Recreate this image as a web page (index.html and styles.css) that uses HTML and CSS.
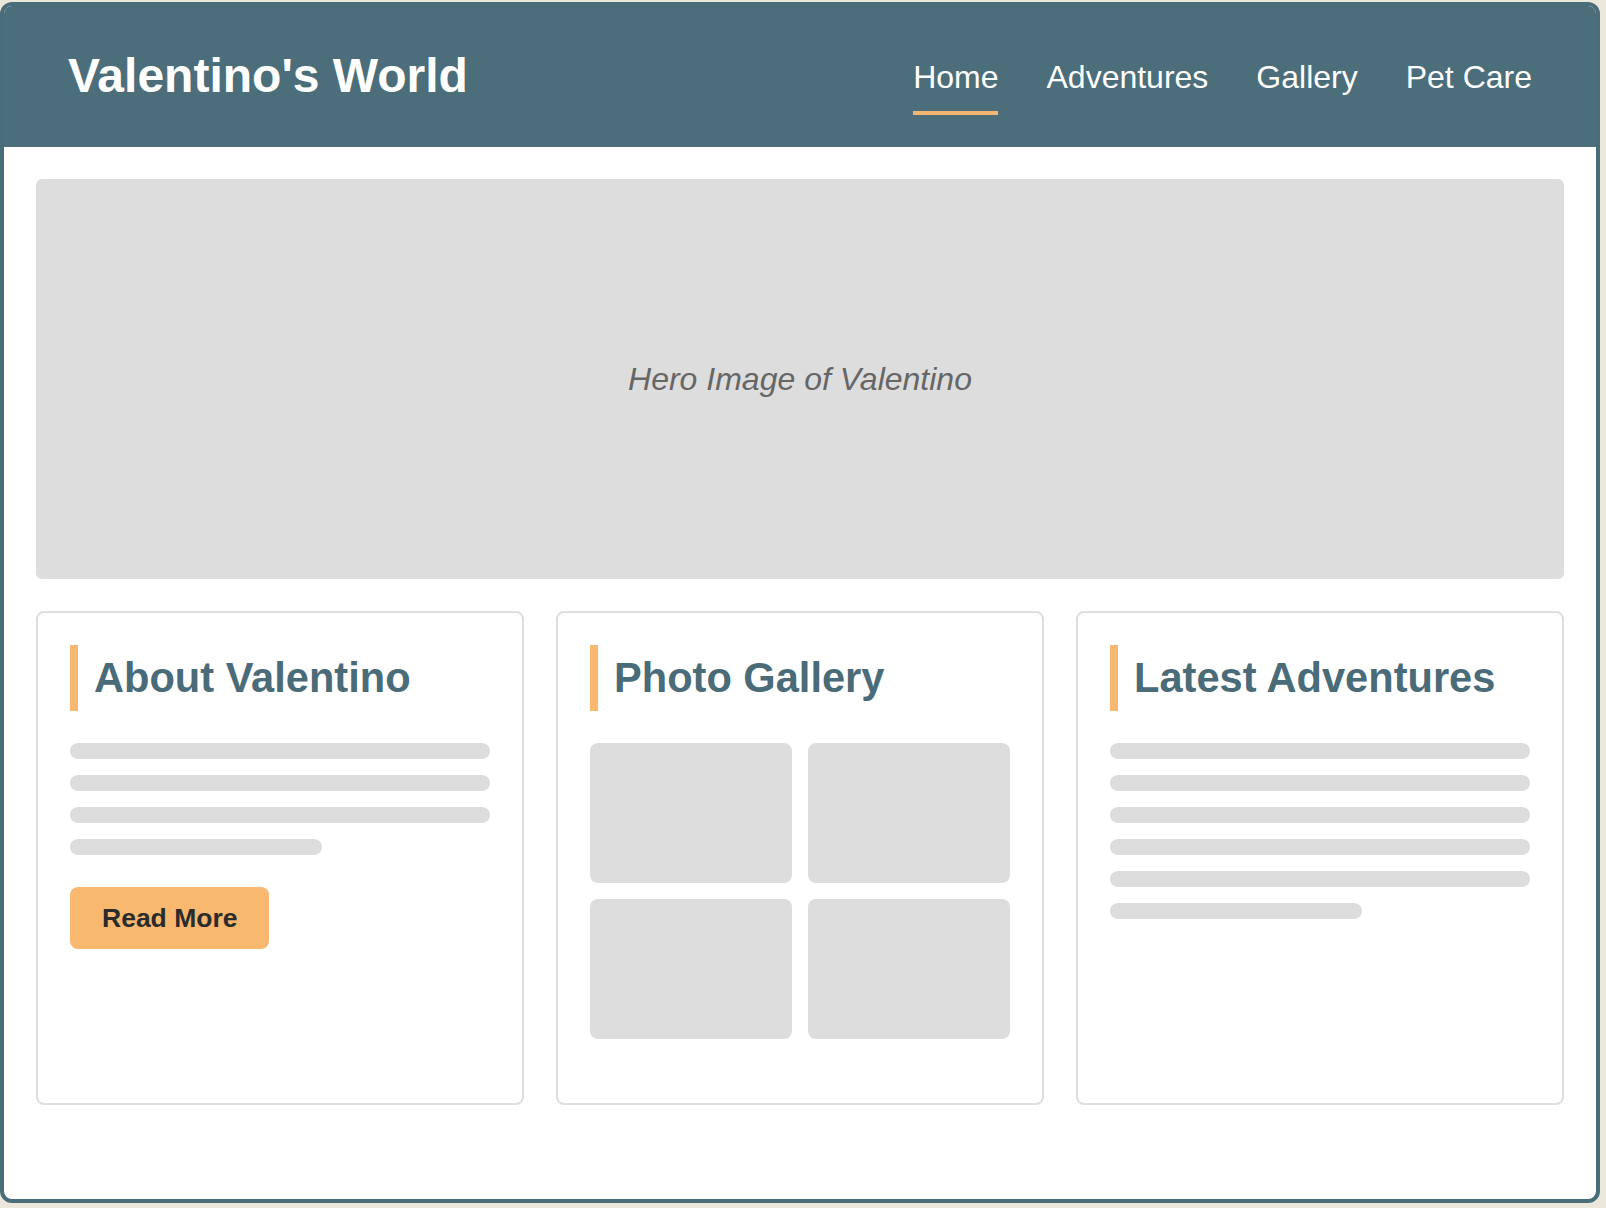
FILE: index.html
```html
<!DOCTYPE html>
<html lang="en">
<head>
<meta charset="utf-8">
<title>Valentino's World</title>
<link rel="stylesheet" href="styles.css">
</head>
<body>
<div class="frame">
  <header class="site-header">
    <h1 class="site-title">Valentino's World</h1>
    <nav class="site-nav">
      <a class="nav-link active" href="#">Home</a>
      <a class="nav-link" href="#">Adventures</a>
      <a class="nav-link" href="#">Gallery</a>
      <a class="nav-link" href="#">Pet Care</a>
    </nav>
  </header>
  <main class="content">
    <section class="hero">
      <span class="hero-label">Hero Image of Valentino</span>
    </section>
    <div class="cards">
      <article class="card">
        <h2 class="card-title">About Valentino</h2>
        <div class="lines">
          <div class="line"></div>
          <div class="line"></div>
          <div class="line"></div>
          <div class="line short"></div>
        </div>
        <a class="btn" href="#">Read More</a>
      </article>
      <article class="card">
        <h2 class="card-title">Photo Gallery</h2>
        <div class="gallery">
          <div class="tile"></div>
          <div class="tile"></div>
          <div class="tile"></div>
          <div class="tile"></div>
        </div>
      </article>
      <article class="card">
        <h2 class="card-title">Latest Adventures</h2>
        <div class="lines">
          <div class="line"></div>
          <div class="line"></div>
          <div class="line"></div>
          <div class="line"></div>
          <div class="line"></div>
          <div class="line short"></div>
        </div>
      </article>
    </div>
  </main>
</div>
</body>
</html>
```
FILE: styles.css
```css
* { box-sizing: border-box; }

html, body {
  margin: 0;
  padding: 0;
}

body {
  background: #ebe8db;
  font-family: "Liberation Sans", Arial, Helvetica, sans-serif;
  padding-top: 2px;
}

.frame {
  width: 1600px;
  height: 1201px;
  border: 4px solid #4a6d7a;
  border-radius: 12px;
  background: #ffffff;
  overflow: hidden;
  display: flex;
  flex-direction: column;
}

.site-header {
  height: 141px;
  background: #4b6e7a;
  padding: 39px 64px 0;
  display: flex;
  justify-content: space-between;
  align-items: flex-start;
}

.site-title {
  margin: 0;
  padding-top: 2px;
  color: #ffffff;
  font-size: 48px;
  font-weight: 700;
  line-height: 1.2;
}

.site-nav {
  display: flex;
  gap: 48px;
}

.nav-link {
  color: #ffffff;
  text-decoration: none;
  font-size: 32px;
  line-height: 38px;
  padding: 13px 0 15px;
  border-bottom: 4px solid transparent;
}

.nav-link.active {
  border-bottom-color: #f4b570;
}

.content {
  padding: 32px 32px 32px;
  display: flex;
  flex-direction: column;
  gap: 32px;
}

.hero {
  height: 400px;
  background: #dddddd;
  border-radius: 6px;
  display: flex;
  align-items: center;
  justify-content: center;
}

.hero-label {
  color: #666666;
  font-size: 32px;
  font-style: italic;
}

.cards {
  display: grid;
  grid-template-columns: repeat(3, 1fr);
  gap: 32px;
}

.card {
  min-height: 494px;
  border: 2px solid #dedede;
  border-radius: 8px;
  padding: 32px;
  display: flex;
  flex-direction: column;
  align-items: flex-start;
}

.card-title {
  margin: 0 0 32px;
  align-self: stretch;
  color: #4a6b78;
  font-size: 41.6px;
  font-weight: 700;
  line-height: 50px;
  padding: 8px 0 8px 16px;
  border-left: 8px solid #f8b870;
}

.lines {
  align-self: stretch;
  display: flex;
  flex-direction: column;
  gap: 16px;
}

.line {
  height: 16px;
  border-radius: 8px;
  background: #dddddd;
}

.line.short {
  width: 60%;
}

.btn {
  margin-top: 32px;
  background: #f8b870;
  color: #2b2b2b;
  font-size: 26.5px;
  font-weight: 700;
  line-height: 30px;
  padding: 16px 32px;
  border-radius: 8px;
  text-decoration: none;
}

.gallery {
  align-self: stretch;
  display: grid;
  grid-template-columns: 1fr 1fr;
  gap: 16px;
}

.tile {
  height: 140px;
  background: #dddddd;
  border-radius: 8px;
}
```
